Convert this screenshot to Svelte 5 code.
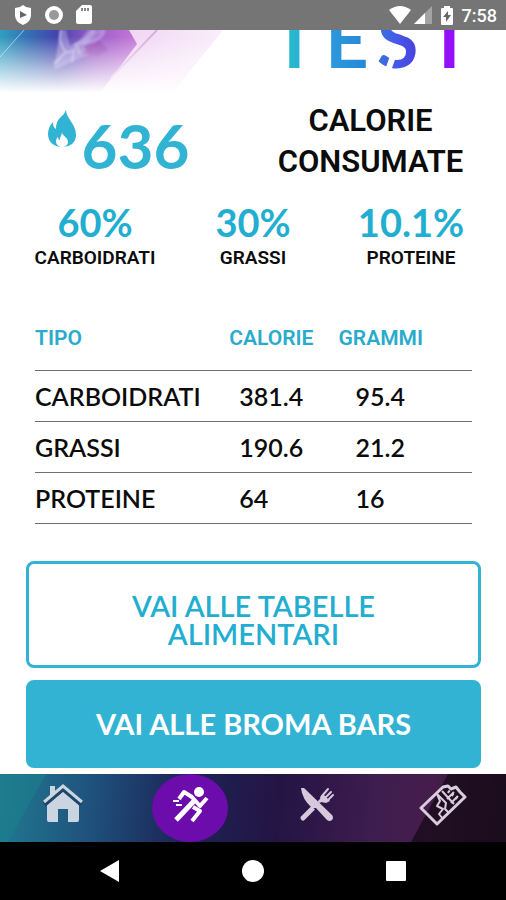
<script>
  const calories = 636;

  const stats = [
    { value: "60%", label: "CARBOIDRATI" },
    { value: "30%", label: "GRASSI" },
    { value: "10.1%", label: "PROTEINE" },
  ];

  const rows = [
    { type: "CARBOIDRATI", calories: 381.4, grams: 95.4 },
    { type: "GRASSI", calories: 190.6, grams: 21.2 },
    { type: "PROTEINE", calories: 64, grams: 16 },
  ];

  let tab = $state("test");
</script>

<div class="screen">
  <header class="status">
    <div class="left">
      <svg width="18" height="20" viewBox="0 0 18 20">
        <path fill="#fff" d="M9 0 12 2 17 3V10Q17 17 9 20 1 17 1 10V3L6 2Z" />
        <path fill="#666" d="M6 6 13 10 6 13Z" />
      </svg>
      <svg width="20" height="20" viewBox="0 0 20 20">
        <circle cx="10" cy="10" r="9" fill="#fff" />
        <circle cx="10" cy="10" r="5" fill="#999" />
      </svg>
      <svg width="16" height="20" viewBox="0 0 16 20">
        <path fill="#fff" d="M6 0H14Q16 0 16 2V17Q16 19 14 19H2Q0 19 0 17V6Z" />
        <path stroke="#888" stroke-width="2" d="M6 3V6M9 3V6M12 3V6" />
      </svg>
    </div>
    <div class="right">
      <svg width="22" height="18" viewBox="0 0 22 18">
        <path fill="#fff" d="M0 4Q11 -4 22 4L11 18Z" />
      </svg>
      <svg width="18" height="18" viewBox="0 0 18 18">
        <path fill="#a3a3a3" d="M18 0V18H0Z" />
        <path fill="#fff" d="M11 7V18H0Z" />
      </svg>
      <svg class="battery" width="12" height="19" viewBox="0 0 12 19">
        <path fill="#fff" d="M3 0H9V2H11Q12 2 12 3V18Q12 19 11 19H1Q0 19 0 18V3Q0 2 1 2H3Z" />
        <path fill="#666" d="M7 5 2 11H5V16L10 9H7Z" />
      </svg>
      <time>7:58</time>
    </div>
  </header>

  <main>
    <div class="hero">
      <svg class="art" width="226" height="66" viewBox="0 0 226 66">
        <defs>
          <linearGradient id="sky" x1="0" x2="1">
            <stop offset="0" stop-color="#2f9fc0" />
            <stop offset="0.2" stop-color="#3570b4" />
            <stop offset="0.42" stop-color="#4343ad" />
            <stop offset="0.68" stop-color="#9a5cc6" />
            <stop offset="1" stop-color="#c578d8" />
          </linearGradient>
          <linearGradient id="pale" x1="0" x2="1">
            <stop offset="0" stop-color="#ecc9f0" />
            <stop offset="1" stop-color="#faeefb" />
          </linearGradient>
          <linearGradient id="fade" x1="0" x2="0" y1="0" y2="1">
            <stop offset="0.1" stop-color="#fff" stop-opacity="0" />
            <stop offset="0.6" stop-color="#fff" stop-opacity="0.6" />
            <stop offset="0.95" stop-color="#fff" />
          </linearGradient>
          <filter id="smoke"><feGaussianBlur stdDeviation="1" /></filter>
        </defs>
        <path fill="url(#pale)" d="M130 0H223L170 66H80Z" />
        <path fill="url(#sky)" d="M0 0H129L137 14 98 66H0Z" />
        <path fill="#c5b4ea" opacity="0.45" d="M60 0H66L70 16 80 10 88 0H104L84 16 90 24 76 30 54 40Z" filter="url(#smoke)" />
        <path fill="#9646b4" opacity="0.7" d="M89 14 98 9 108 20 98 26 83 24Z" filter="url(#smoke)" />
        <g fill="none" stroke="#c4c0ee" filter="url(#smoke)">
          <path stroke-width="2" opacity="0.7" d="M61 0Q58 14 66 22L54 34M66 23 74 20 72 32" />
          <path stroke-width="4" opacity="0.5" d="M94 0Q88 10 76 15L80 24M104 0Q100 12 82 13" />
        </g>
        <path stroke="#93c6e4" stroke-width="1" d="M24 0 0 27" />
        <path stroke="#d8b0df" stroke-width="2" d="M157 0 111 48" />
        <path fill="url(#fade)" d="M0 0H226V66H0Z" />
      </svg>
      <div class="logo">
        <h1 aria-label="TEST"><span>T</span><span>E</span><span>S</span><span>T</span></h1>
      </div>
    </div>

    <section class="total">
      <div class="kcal">
        <svg width="29" height="38" viewBox="0 0 29 38">
          <path
            fill="#31b3d3"
            d="M18 0C18 8 28 14 28 25 28 33 22 37 14 37 6 37 0 32 0 24 0 19 2 15 5 12 5 16 6 18 8 19 8 10 12 8 15 5 17 3 17 1 18 0Z" />
          <path
            fill="#fff"
            d="M14 22C14 26 20 27 20 32 20 35 17 37 14 37 11 37 8 35 8 31 8 29 9 28 10 27 10 29 11 30 12 30 12 26 14 25 14 22Z" />
        </svg>
        <strong>{calories}</strong>
      </div>
      <h2>CALORIE CONSUMATE</h2>
    </section>

    <section class="stats">
      {#each stats as stat}
        <div class="stat">
          <span class="value">{stat.value}</span>
          <span class="label">{stat.label}</span>
        </div>
      {/each}
    </section>

    <table>
      <thead>
        <tr>
          <th scope="col">TIPO</th>
          <th scope="col">CALORIE</th>
          <th scope="col">GRAMMI</th>
        </tr>
      </thead>
      <tbody>
        {#each rows as row}
          <tr>
            <td>{row.type}</td>
            <td>{row.calories}</td>
            <td>{row.grams}</td>
          </tr>
        {/each}
      </tbody>
    </table>

    <div class="actions">
      <button class="outline">VAI ALLE TABELLE ALIMENTARI</button>
      <button class="filled">VAI ALLE BROMA BARS</button>
    </div>
  </main>

  <nav class="tabs">
    <svg class="backdrop" viewBox="0 0 506 68" preserveAspectRatio="none">
      <path fill="#1c7f8c" opacity="0.6" d="M0 0H46L8 68H0Z" />
      <path fill="#190b1b" opacity="0.8" d="M448 0H506V68H411Z" />
    </svg>
    <button class:active={tab === "home"} aria-label="Home" onclick={() => (tab = "home")}>
      <svg width="40" height="40" viewBox="0 0 40 40">
        <path fill="#cbd5e2" d="M4 21 20 7 36 21V36Q36 38 34 38H25V25H15V38H6Q4 38 4 36Z" />
        <path fill="none" stroke="#1d4669" stroke-width="6" d="M1 20 20 4 39 20" />
        <path fill="#cbd5e2" d="M7 2H12V8L7 12Z" />
        <path fill="none" stroke="#cbd5e2" stroke-width="3" d="M1 18 20 2 39 18" />
      </svg>
    </button>
    <button class:active={tab === "test"} aria-label="Test" onclick={() => (tab = "test")}>
      <svg width="40" height="40" viewBox="0 0 40 40">
        <circle cx="29" cy="8" r="5" fill="#fff" />
        <g fill="none" stroke="#fff" stroke-width="4" stroke-linejoin="round">
          <path stroke-width="5" d="M6 36 25 16" />
          <path d="M9 15 14 8 22 13" />
          <path d="M21 12 30 22 37 14" />
          <path d="M23 23 30 27 22 37" />
          <path stroke-width="2" d="M3 17H9M6 21H12" />
        </g>
      </svg>
    </button>
    <button class:active={tab === "food"} aria-label="Alimenti" onclick={() => (tab = "food")}>
      <svg width="40" height="40" viewBox="0 0 40 40">
        <g fill="none" stroke="#d8c8dc" stroke-linecap="round">
          <path stroke-width="5" d="M7 34 17 24" />
          <path stroke-width="3" d="M15 26 27 14" />
          <path stroke-width="2" d="M26 12 32 5M29 14 35 8M31 17 37 11" />
        </g>
        <path fill="#d8c8dc" d="M24 13 27 10 34 17 30 19 25 18Z" />
        <path stroke="#32174b" stroke-width="8" d="M15 16 29 30" />
        <path fill="#d8c8dc" d="M5 4 8 4 36 31Q38 34 36 36 34 38 31 36L20 24 16 24Q6 15 5 4Z" />
      </svg>
    </button>
    <button class:active={tab === "bars"} aria-label="Broma bars" onclick={() => (tab = "bars")}>
      <svg width="48" height="44" viewBox="0 0 48 44">
        <g fill="none" stroke="#d9ccdc" stroke-width="3" stroke-linejoin="round">
          <path d="M2 24 24 3 29 2 32 5 37 3 41 8 46 13 18 40Z" />
          <path stroke-width="2" d="M18 10 21 17 18 22 24 25 20 30 24 35" />
          <path stroke-width="2" d="M18 10 27 19 26 25 30 29" />
        </g>
        <path fill="none" stroke="#d9ccdc" stroke-width="2" d="M23 7 35 20M28 15 35 8M32 19 39 12" />
        <path fill="none" stroke="#d9ccdc" stroke-width="3" stroke-dasharray="2 3" d="M29 7 41 17" />
      </svg>
    </button>
  </nav>

  <footer class="system">
    <button aria-label="Indietro">
      <svg width="20" height="22" viewBox="0 0 20 22"><path fill="#fff" d="M19 0V22L0 11Z" /></svg>
    </button>
    <button aria-label="Schermata principale">
      <svg width="22" height="22" viewBox="0 0 22 22"><circle cx="11" cy="11" r="11" fill="#fff" /></svg>
    </button>
    <button aria-label="Recenti">
      <svg width="20" height="20" viewBox="0 0 20 20"><rect width="20" height="20" rx="1" fill="#fff" /></svg>
    </button>
  </footer>
</div>

<style>
  :global(body) {
    background-color: #fff;
  }

  .screen {
    display: flex;
    flex-direction: column;
    min-height: 100vh;
    font-family: Roboto, sans-serif;
    color: #0c0c0c;
  }

  svg {
    display: block;
  }

  button {
    border: none;
    padding: 0;
    background: none;
    cursor: pointer;
  }

  .status {
    display: flex;
    justify-content: space-between;
    align-items: center;
    height: 30px;
    padding: 0 9px 0 14px;
    background-color: #757575;
    color: #fff;
  }

  .left,
  .right {
    display: flex;
    align-items: center;
  }

  .left {
    gap: 12px;
  }

  .right {
    gap: 3px;
  }

  .battery {
    margin: 0 6px;
  }

  time {
    font-size: 18px;
    font-weight: 500;
  }

  main {
    flex: 1;
  }

  .hero {
    display: flex;
    justify-content: space-between;
    height: 66px;
    overflow: hidden;
  }

  .logo {
    position: relative;
    margin-right: 34px;
  }

  h1 {
    display: flex;
    gap: 8px;
    margin: -35px 0 0;
    font: 700 76px/88px Lato, sans-serif;
    color: transparent;
    background: linear-gradient(90deg, #27bccd 8%, #2e9ddb 26%, #2789d8 46%, #4659e8 62%, #4a3ada 76%, #9410fb 86%);
    background-clip: text;
  }

  /* notch in the tail of the S */
  .logo::after {
    content: "";
    position: absolute;
    left: 117px;
    top: 23px;
    width: 6px;
    height: 18px;
    background-color: #fff;
    transform: rotate(20deg);
  }

  .total {
    display: grid;
    grid-template-columns: 1fr 1fr;
    padding: 4px 12px 0 0;
  }

  .kcal {
    display: flex;
    justify-content: center;
    gap: 5px;
    padding: 10px 10px 0 0;
  }

  .kcal strong {
    font: 700 62px/70px Lato, sans-serif;
    color: #31b3d3;
  }

  h2 {
    justify-self: center;
    width: min-content;
    margin: 0;
    font-size: 31px;
    font-weight: 600;
    line-height: 41px;
    text-align: center;
  }

  .stats {
    display: grid;
    grid-template-columns: repeat(3, 1fr);
    padding: 18px 16px 0;
  }

  .stat {
    display: flex;
    flex-direction: column;
    align-items: center;
  }

  .value {
    font: 700 38px/44px Lato, sans-serif;
    color: #22aed0;
  }

  .label {
    font-size: 19px;
    font-weight: 600;
    line-height: 28px;
  }

  table {
    width: calc(100% - 69px);
    margin: 50px 34px 0 35px;
    border-collapse: collapse;
    table-layout: fixed;
    text-align: left;
  }

  th {
    height: 48px;
    padding: 0;
    font-size: 21px;
    font-weight: 600;
    line-height: 32px;
    vertical-align: top;
    color: #2aabcb;
  }

  th:first-child {
    width: 44%;
  }

  th:nth-child(2) {
    width: 25%;
    padding-left: 2px;
  }

  tr {
    border-bottom: 1px solid #707070;
  }

  td {
    height: 50px;
    padding: 0;
    font: 600 25px/30px Lato, sans-serif;
  }

  td:nth-child(2) {
    padding-left: 12px;
  }

  td:nth-child(3) {
    padding-left: 17px;
  }

  .actions {
    display: flex;
    flex-direction: column;
    gap: 12px;
    padding: 37px 25px 6px 26px;
  }

  .actions button {
    border: 3px solid #31b3d3;
    border-radius: 8px;
    font: 600 29px/28px Lato, sans-serif;
  }

  .outline {
    padding: 28px 84px 17px;
    color: #22aed0;
  }

  .actions .filled {
    padding: 27px 20px;
    background-color: #33b3d4;
    color: #fff;
    font-weight: 700;
  }

  .tabs {
    position: relative;
    display: grid;
    grid-template-columns: repeat(4, 1fr);
    height: 68px;
    overflow: hidden;
    background: linear-gradient(95deg, #207a91, #1f527d 18%, #1c2557 36%, #241444 55%, #401d50 75%, #451d4b 85%, #241024);
  }

  .backdrop {
    position: absolute;
    width: 100%;
    height: 100%;
  }

  .tabs button {
    position: relative;
    display: flex;
    justify-content: center;
    justify-self: center;
    width: 76px;
    height: 68px;
    padding-top: 10px;
  }

  .tabs .active {
    border-radius: 50%;
    background-color: #6c0cac;
  }

  .system {
    display: flex;
    justify-content: space-between;
    align-items: center;
    height: 58px;
    padding: 0 100px;
    background-color: #000;
  }
</style>
